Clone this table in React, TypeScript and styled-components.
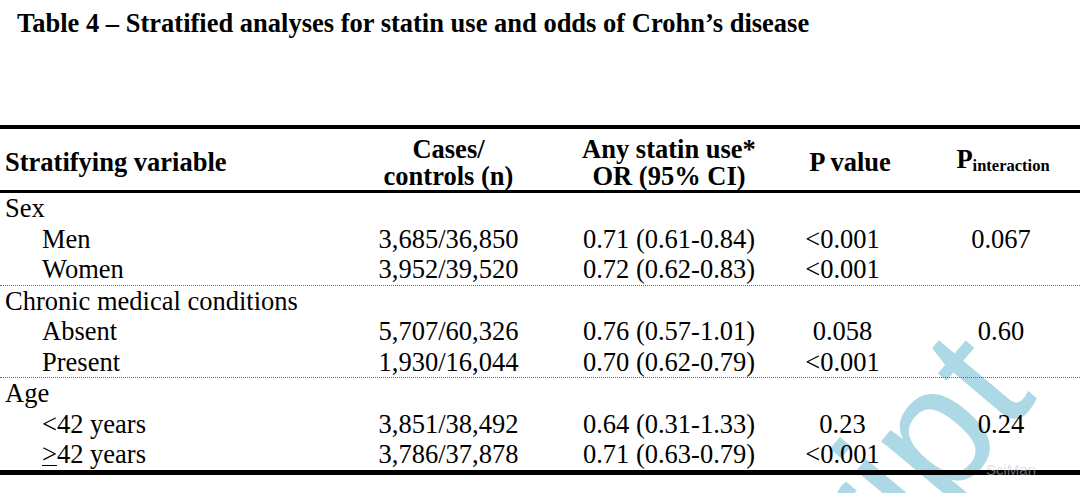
import React from 'react';
import styled, { createGlobalStyle } from 'styled-components';

const GlobalStyle = createGlobalStyle`
  html, body {
    margin: 0;
    padding: 0;
    background: #ffffff;
  }
  body {
    font-family: "Liberation Serif", "Times New Roman", serif;
    color: #000000;
  }
`;

const Page = styled.div`
  position: relative;
  width: 1080px;
  height: 493px;
  overflow: hidden;
  background: #ffffff;
`;

const Watermark = styled.svg`
  position: absolute;
  left: 0;
  top: 0;
  width: 1080px;
  height: 493px;
  z-index: 0;
  pointer-events: none;
`;

const Content = styled.div`
  position: relative;
  z-index: 1;
  padding-top: 8px;
`;

const Title = styled.h1`
  margin: 0 0 87px 17px;
  font-size: 26.5px;
  line-height: 30px;
  font-weight: 700;
  white-space: nowrap;
`;

const Rule = styled.div<{ $h: number }>`
  height: ${(p) => p.$h}px;
  background: #000000;
`;

const Dotted = styled.div`
  height: 0;
  border-top: 1px dotted #6a6a6a;
`;

const columns = '330px 237px 204px 158px 148px';

const HeadRow = styled.div`
  display: grid;
  grid-template-columns: ${columns};
  align-items: center;
  box-sizing: border-box;
  height: 61px;
  padding-top: 6px;
  font-size: 26.5px;
  line-height: 27px;
  font-weight: 700;
`;

const HeadCell = styled.div<{ $left?: boolean }>`
  display: flex;
  flex-direction: column;
  align-items: ${(p) => (p.$left ? 'flex-start' : 'center')};
  padding-left: ${(p) => (p.$left ? 5 : 0)}px;
  white-space: nowrap;
`;

const Sub = styled.span`
  font-size: 16.5px;
  vertical-align: -3px;
`;

const Row = styled.div`
  display: grid;
  grid-template-columns: ${columns};
  font-size: 26.5px;
  line-height: 30.5px;
  height: 30.5px;
`;

const Label = styled.div<{ $indent?: boolean }>`
  padding-left: ${(p) => (p.$indent ? 42 : 5)}px;
  white-space: nowrap;
`;

const SectionLabel = styled(Label)`
  grid-column: 1 / -1;
`;

const Cell = styled.div<{ $shift?: number }>`
  display: flex;
  justify-content: center;
  padding-right: ${(p) => p.$shift ?? 0}px;
  white-space: nowrap;
`;

const Under = styled.span`
  text-decoration: underline;
  text-decoration-thickness: 1px;
  text-underline-offset: 2px;
`;

const Stamp = styled.span`
  position: absolute;
  left: 986px;
  top: 461px;
  z-index: 2;
  font-family: "Liberation Sans", Arial, sans-serif;
  font-size: 15px;
  color: rgba(200, 200, 200, 0.55);
`;

type Entry = {
  label: React.ReactNode;
  cases: string;
  or: string;
  p: string;
  pint?: string;
};

type Group = { name: string; rows: Entry[] };

const groups: Group[] = [
  {
    name: 'Sex',
    rows: [
      { label: 'Men', cases: '3,685/36,850', or: '0.71 (0.61-0.84)', p: '<0.001', pint: '0.067' },
      { label: 'Women', cases: '3,952/39,520', or: '0.72 (0.62-0.83)', p: '<0.001' },
    ],
  },
  {
    name: 'Chronic medical conditions',
    rows: [
      { label: 'Absent', cases: '5,707/60,326', or: '0.76 (0.57-1.01)', p: '0.058', pint: '0.60' },
      { label: 'Present', cases: '1,930/16,044', or: '0.70 (0.62-0.79)', p: '<0.001' },
    ],
  },
  {
    name: 'Age',
    rows: [
      { label: '<42 years', cases: '3,851/38,492', or: '0.64 (0.31-1.33)', p: '0.23', pint: '0.24' },
      {
        label: (
          <>
            <Under>&gt;</Under>42 years
          </>
        ),
        cases: '3,786/37,878',
        or: '0.71 (0.63-0.79)',
        p: '<0.001',
      },
    ],
  },
];

export default function App() {
  return (
    <>
      <GlobalStyle />
      <Page>
        <Watermark viewBox="0 0 1080 493">
          <text
            x="882"
            y="584"
            transform="rotate(-50 882 584)"
            fontFamily='"Liberation Sans", Arial, sans-serif'
            fontSize="175"
            fill="#add8e6"
          >
            ript
          </text>
        </Watermark>
        <Content>
          <Title>Table 4 – Stratified analyses for statin use and odds of Crohn’s disease</Title>
          <Rule $h={4} />
          <HeadRow>
            <HeadCell $left>Stratifying variable</HeadCell>
            <HeadCell>
              <span>Cases/</span>
              <span>controls (n)</span>
            </HeadCell>
            <HeadCell>
              <span>Any statin use*</span>
              <span>OR (95% CI)</span>
            </HeadCell>
            <HeadCell>P value</HeadCell>
            <HeadCell>
              <span>
                P<Sub>interaction</Sub>
              </span>
            </HeadCell>
          </HeadRow>
          <Rule $h={3} />
          {groups.map((g, gi) => (
            <React.Fragment key={g.name}>
              {gi > 0 && <Dotted />}
              <Row>
                <SectionLabel>{g.name}</SectionLabel>
              </Row>
              {g.rows.map((r, ri) => (
                <Row key={ri}>
                  <Label $indent>{r.label}</Label>
                  <Cell>{r.cases}</Cell>
                  <Cell>{r.or}</Cell>
                  <Cell $shift={15}>{r.p}</Cell>
                  <Cell $shift={4}>{r.pint ?? ''}</Cell>
                </Row>
              ))}
            </React.Fragment>
          ))}
          <Rule $h={5} />
        </Content>
        <Stamp>SciMan</Stamp>
      </Page>
    </>
  );
}
